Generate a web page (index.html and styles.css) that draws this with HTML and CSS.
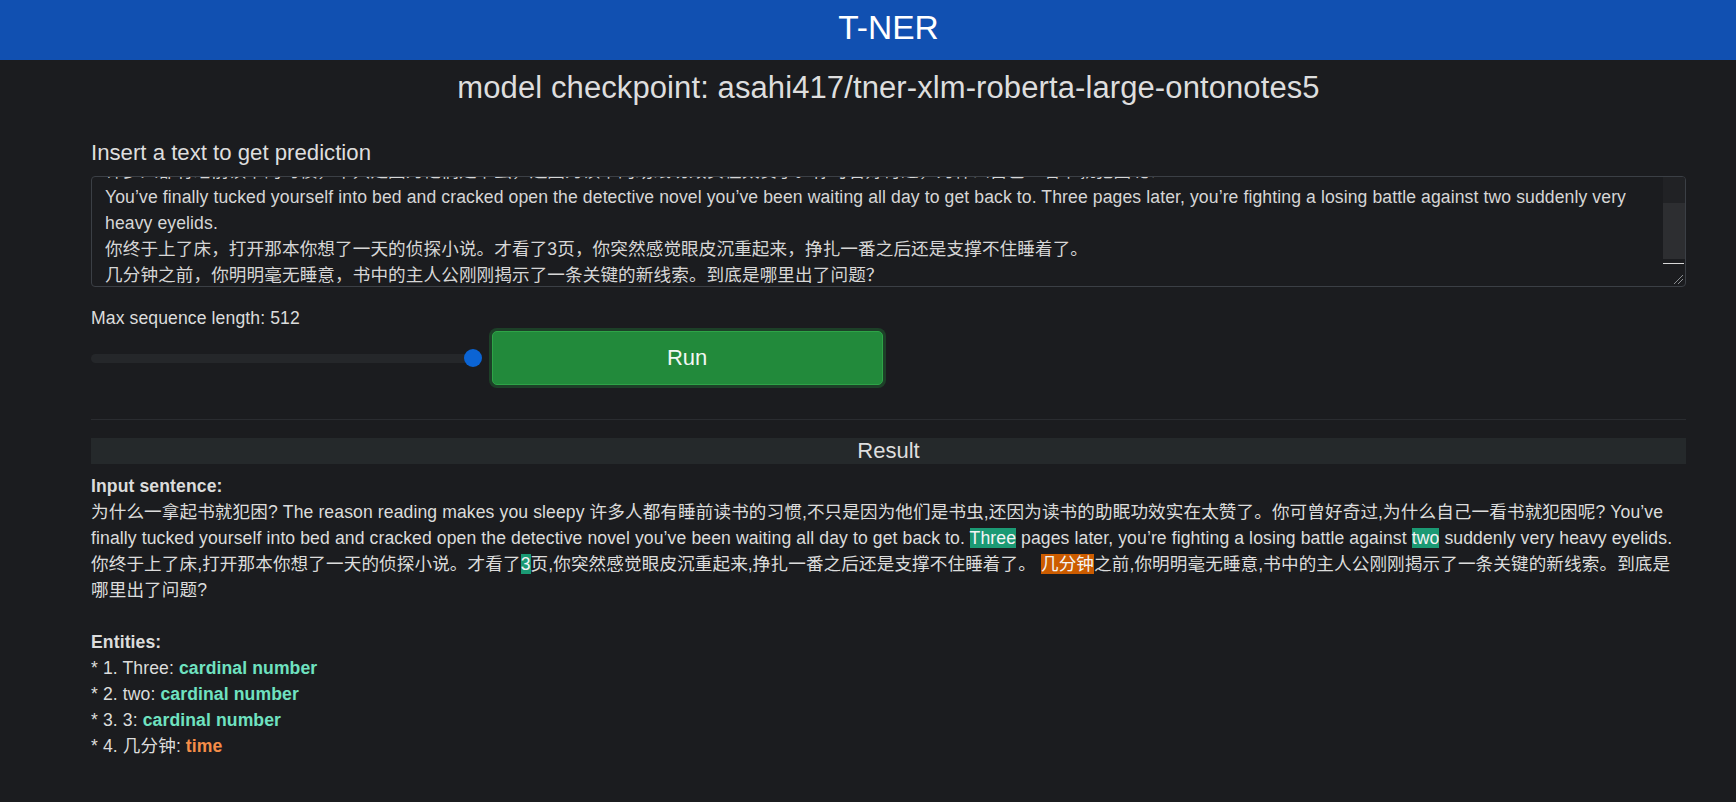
FILE: index.html
```html
<!DOCTYPE html>
<html lang="en">
<head>
<meta charset="utf-8">
<title>T-NER</title>
<link rel="stylesheet" href="styles.css">
</head>
<body>
<header class="topbar">
  <h1 class="title">T-NER</h1>
</header>
<main class="page">
  <h2 class="subtitle">model checkpoint: asahi417/tner-xlm-roberta-large-ontonotes5</h2>

  <section class="input">
    <label class="input-label">Insert a text to get prediction</label>
    <div class="textbox">
      <div class="textbox-view">
        <div class="textbox-text">许多人都有睡前读书的习惯，不只是因为他们是书虫，还因为读书的助眠功效实在太赞了。你可曾好奇过，为什么自己一看书就犯困呢？<br>You’ve finally tucked yourself into bed and cracked open the detective novel you’ve been waiting all day to get back to. Three pages later, you’re fighting a losing battle against two suddenly very heavy eyelids.<br>你终于上了床，打开那本你想了一天的侦探小说。才看了3页，你突然感觉眼皮沉重起来，挣扎一番之后还是支撑不住睡着了。<br>几分钟之前，你明明毫无睡意，书中的主人公刚刚揭示了一条关键的新线索。到底是哪里出了问题？</div>
      </div>
      <div class="scrollbar">
        <div class="sb-track"></div>
        <div class="sb-thumb"></div>
        <div class="sb-line"></div>
        <div class="sb-resizer">
          <svg width="12" height="12" viewBox="0 0 12 12"><path d="M2 11 L11 2 M6 11 L11 6" stroke="#8a8d91" stroke-width="1" fill="none"/></svg>
        </div>
      </div>
    </div>
  </section>

  <section class="controls">
    <div class="slider-label">Max sequence length: 512</div>
    <div class="controls-row">
      <div class="slider">
        <div class="slider-track"></div>
        <div class="slider-thumb"></div>
      </div>
      <button class="run">Run</button>
    </div>
  </section>

  <hr class="divider">

  <div class="result-bar">Result</div>

  <section class="result">
    <p class="result-para"><b>Input sentence:</b><br>为什么一拿起书就犯困? The reason reading makes you sleepy 许多人都有睡前读书的习惯,不只是因为他们是书虫,还因为读书的助眠功效实在太赞了。你可曾好奇过,为什么自己一看书就犯困呢? You’ve finally tucked yourself into bed and cracked open the detective novel you’ve been waiting all day to get back to. <span class="hl hl-card">Three</span> pages later, you’re fighting a losing battle against <span class="hl hl-card">two</span> suddenly very heavy eyelids. 你终于上了床,打开那本你想了一天的侦探小说。才看了<span class="hl hl-card">3</span>页,你突然感觉眼皮沉重起来,挣扎一番之后还是支撑不住睡着了。 <span class="hl hl-time">几分钟</span>之前,你明明毫无睡意,书中的主人公刚刚揭示了一条关键的新线索。到底是哪里出了问题?</p>
    <p class="result-para"><b>Entities:</b><br>
      * 1. Three: <b class="ent-card">cardinal number</b><br>
      * 2. two: <b class="ent-card">cardinal number</b><br>
      * 3. 3: <b class="ent-card">cardinal number</b><br>
      * 4. 几分钟: <b class="ent-time">time</b></p>
  </section>
</main>
</body>
</html>
```
FILE: styles.css
```css
* { box-sizing: border-box; }

html, body {
  margin: 0;
  padding: 0;
  background: #1b1c1f;
  color: #dcdcdc;
  font-family: "Liberation Sans", "Noto Sans CJK SC", sans-serif;
  font-size: 17.6px;
  line-height: 26px;
  letter-spacing: 0.1px;
}

.topbar {
  height: 60px;
  background: #1150b1;
  padding: 0 50px 0 91px;
}

.title {
  margin: 0;
  font-size: 33.5px;
  font-weight: normal;
  line-height: 55px;
  letter-spacing: 0;
  color: #ffffff;
  text-align: center;
}

.page {
  padding: 0 50px 40px 91px;
}

.subtitle {
  margin: 10px 0 0;
  font-size: 31px;
  font-weight: normal;
  line-height: 36px;
  letter-spacing: 0.1px;
  text-align: center;
  color: #dedede;
}

.input {
  margin-top: 34px;
  display: flex;
  flex-direction: column;
}

.input-label {
  font-size: 22.2px;
  line-height: 26px;
  letter-spacing: 0;
  color: #dedede;
}

.textbox {
  margin-top: 10px;
  height: 111px;
  border: 1px solid #3b3f45;
  border-radius: 4px;
  display: flex;
  overflow: hidden;
}

.textbox-view {
  flex: 1;
  overflow: hidden;
  padding: 8px 12px 0 13px;
}

.textbox-text {
  margin-top: -27.4px;
  color: #d6d6d6;
}

.scrollbar {
  width: 22px;
  display: flex;
  flex-direction: column;
}

.sb-track {
  height: 26px;
  background: #212225;
}

.sb-thumb {
  height: 56px;
  background: #2d2e31;
}

.sb-line {
  margin-top: 4px;
  height: 1px;
  width: 21px;
  background: #d8d8d8;
}

.sb-resizer {
  flex: 1;
  display: flex;
  justify-content: flex-end;
  align-items: flex-end;
  padding: 0 1px 1px 0;
}

.sb-resizer svg { display: block; }

.controls {
  margin-top: 18px;
}

.slider-label {
  line-height: 26px;
}

.controls-row {
  display: grid;
  grid-template-columns: repeat(4, 1fr);
  column-gap: 8px;
  align-items: center;
}

.slider {
  display: flex;
  align-items: center;
  height: 18px;
  padding-right: 2px;
}

.slider-track {
  flex: 1;
  height: 9px;
  border-radius: 5px;
  background: #25272a;
  margin-right: -9px;
}

.slider-thumb {
  width: 18px;
  height: 18px;
  border-radius: 50%;
  background: #0b64d4;
  position: relative;
}

.run {
  height: 54px;
  margin: 0 2px 0 0;
  background: #228a3b;
  border: 1px solid #2ea447;
  border-radius: 5px;
  box-shadow: 0 0 0 3px #1d4028;
  color: #f2f7f3;
  font-family: "Liberation Sans", sans-serif;
  font-size: 22px;
}

.divider {
  margin: 34px 0 0;
  border: 0;
  height: 1px;
  background: #2a2c30;
}

.result-bar {
  margin-top: 18px;
  height: 26px;
  background: #25292b;
  text-align: center;
  font-size: 22px;
  line-height: 26px;
  letter-spacing: 0;
  color: #dedede;
}

.result {
  margin-top: 9px;
}

.result-para {
  margin: 0 0 26px;
}

.hl { color: #f4f4f4; }
.hl-card { background: #1b9a74; }
.hl-time { background: #cc5c00; }

.ent-card { color: #6fe2c0; }
.ent-time { color: #f58d48; }
```
